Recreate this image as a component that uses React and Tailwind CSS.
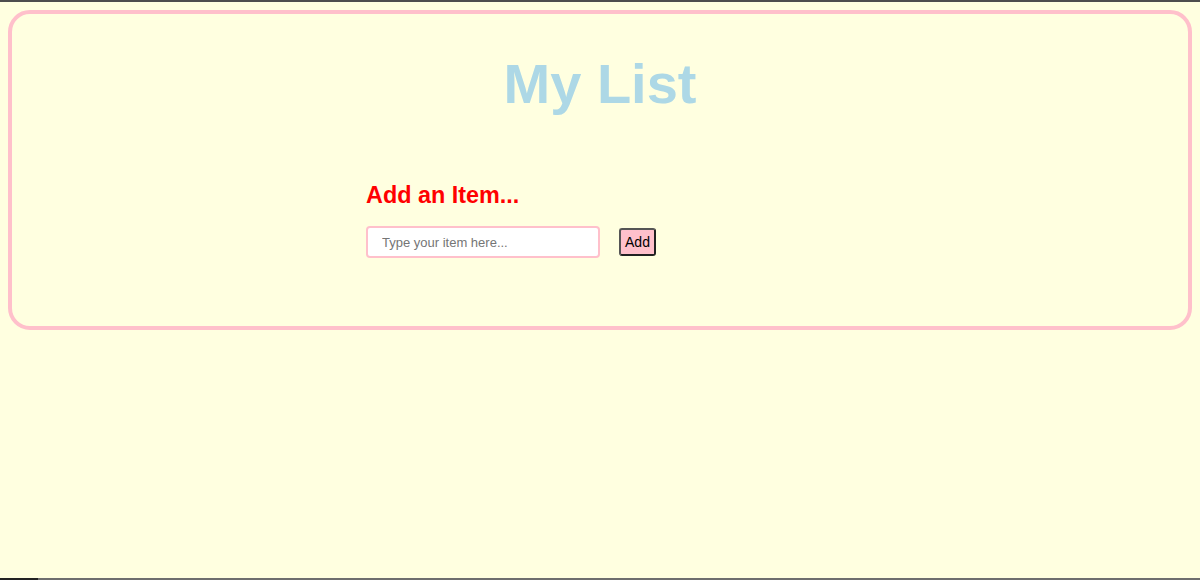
import React from "react";

export default function App() {
  return (
    <div
      className="min-h-[580px] h-[580px] flex flex-col bg-[#ffffe0] overflow-hidden"
      style={{ fontFamily: '"Liberation Sans", Arial, sans-serif' }}
    >
      <div className="h-[2px] bg-[#4d4d4d] shrink-0" />
      <div className="flex-1 px-[8px] pt-[8px]">
        <div className="h-[320px] border-4 border-[#ffc0cb] rounded-[22px] flex flex-col">
          <h1 className="mt-[38px] text-center text-[56px] leading-[64px] font-bold text-[#add8e6]">
            My List
          </h1>
          <div className="w-[468px] mx-auto mt-[65px]">
            <h2 className="text-[23.4px] leading-[28px] font-bold text-[#ff0000]">
              Add an Item...
            </h2>
            <div className="mt-[17px] flex items-center gap-[19px]">
              <input
                type="text"
                placeholder="Type your item here..."
                className="w-[234px] h-[32px] bg-white border-2 border-[#ffc0cb] rounded-[4px] pl-[14px] text-[13px] placeholder:text-[#757575] outline-none"
                style={{ fontFamily: '"Liberation Sans", Arial, sans-serif' }}
              />
              <button
                className="w-[37px] h-[28px] bg-[#ffc0cb] border-2 border-[#555] border-r-[#222] border-b-[#222] rounded-[3px] text-[14px] text-black flex items-center justify-center"
                style={{ fontFamily: '"Liberation Sans", Arial, sans-serif' }}
              >
                Add
              </button>
            </div>
          </div>
        </div>
      </div>
      <div className="h-[2px] shrink-0 flex">
        <div className="w-[38px] bg-[#222]" />
        <div className="flex-1 bg-[#6e6e6e]" />
      </div>
    </div>
  );
}
